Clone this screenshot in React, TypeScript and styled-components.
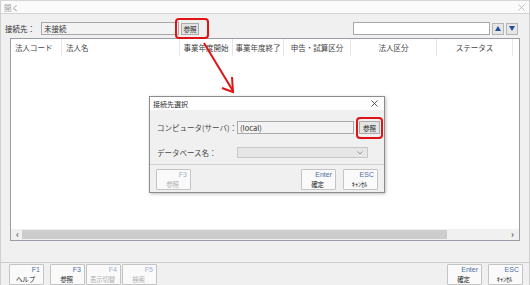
import React from "react";
import styled, { createGlobalStyle } from "styled-components";

const GlobalStyle = createGlobalStyle`
   html, body {
      margin: 0;
      padding: 0;
      background: #ffffff;
   }
   * {
      box-sizing: border-box;
   }
   body {
      font-family: "Noto Sans CJK JP", "Noto Sans", sans-serif;
   }
`;

const columns = [
   { name: "法人コード", align: "left" },
   { name: "法人名", align: "left" },
   { name: "事業年度開始", align: "center" },
   { name: "事業年度終了", align: "center" },
   { name: "申告・試算区分", align: "center" },
   { name: "法人区分", align: "center" },
   { name: "ステータス", align: "center" },
   { name: "", align: "left" },
];

const fnKeys = [
   { key: "F1", label: "ヘルプ", disabled: false },
   { key: "F3", label: "参照", disabled: false },
   { key: "F4", label: "表示切替", disabled: true },
   { key: "F5", label: "検索", disabled: true },
];

const App = () => {
   return (
      <>
         <GlobalStyle />
         <Window>
            <TitleBar>
               <span>開く</span>
               <svg width="7" height="7" viewBox="0 0 7 7">
                  <path d="M0.5 0.5 L6.5 6.5 M6.5 0.5 L0.5 6.5" stroke="#b4b4b4" strokeWidth="0.8" />
               </svg>
            </TitleBar>

            <TopRow>
               <Label>接続先：</Label>
               <ReadOnlyInput $width={138}>未接続</ReadOnlyInput>
               <SmallButton>参照</SmallButton>
               <Spacer />
               <SearchInput />
               <ArrowButton>
                  <svg width="6" height="5" viewBox="0 0 6 5">
                     <polygon points="3,0 6,5 0,5" fill="#1f4f9e" />
                  </svg>
               </ArrowButton>
               <ArrowButton>
                  <svg width="6" height="5" viewBox="0 0 6 5">
                     <polygon points="0,0 6,0 3,5" fill="#1f4f9e" />
                  </svg>
               </ArrowButton>
            </TopRow>

            <Table>
               <HeaderRow>
                  {columns.map((col, i) => (
                     <HeaderCell key={i} $align={col.align} $last={i === columns.length - 1}>
                        {col.name}
                     </HeaderCell>
                  ))}
               </HeaderRow>
               <TableBody />
               <HScroll>
                  <ScrollArrow>‹</ScrollArrow>
                  <ScrollThumb />
                  <ScrollArrow>›</ScrollArrow>
               </HScroll>
            </Table>

            <FnBar>
               {fnKeys.map((k) => (
                  <FnButton key={k.key} $disabled={k.disabled} $gap={k.key === "F3" ? 6 : 1}>
                     <FnKey>{k.key}</FnKey>
                     <FnLabel>{k.label}</FnLabel>
                  </FnButton>
               ))}
               <Spacer />
               <FnButton $gap={0}>
                  <FnKey>Enter</FnKey>
                  <FnLabel>確定</FnLabel>
               </FnButton>
               <FnButton $gap={6}>
                  <FnKey>ESC</FnKey>
                  <FnLabel>ｷｬﾝｾﾙ</FnLabel>
               </FnButton>
            </FnBar>

            <Highlight $x={174} $y={17} $w={34} $h={21} />

            <Arrow width="40" height="60" viewBox="0 0 40 60">
               <line x1="4" y1="3" x2="33" y2="51" stroke="#e01414" strokeWidth="2" />
               <polyline points="32,37 33,52 22,48" fill="none" stroke="#e01414" strokeWidth="2" />
            </Arrow>

            <Dialog>
               <DialogTitle>
                  <span>接続先選択</span>
                  <svg width="7" height="7" viewBox="0 0 7 7">
                     <path d="M0.5 0.5 L6.5 6.5 M6.5 0.5 L0.5 6.5" stroke="#333" strokeWidth="0.8" />
                  </svg>
               </DialogTitle>
               <DialogBody>
                  <FieldRow>
                     <FieldLabel>コンピュータ(サーバ)：</FieldLabel>
                     <ReadOnlyInput $width={117}>(local)</ReadOnlyInput>
                     <SmallButton $ml={5} $w={21} $h={13}>参照</SmallButton>
                  </FieldRow>
                  <FieldRow>
                     <FieldLabel>データベース名：</FieldLabel>
                     <SelectBox>
                        <svg width="6" height="4" viewBox="0 0 6 4">
                           <polyline points="0.5,0.5 3,3 5.5,0.5" fill="none" stroke="#8a8a8a" strokeWidth="0.9" />
                        </svg>
                     </SelectBox>
                  </FieldRow>
               </DialogBody>
               <DialogFooter>
                  <FnButton $disabled $gap={0}>
                     <FnKey>F3</FnKey>
                     <FnLabel>参照</FnLabel>
                  </FnButton>
                  <Spacer />
                  <FnButton $gap={0}>
                     <FnKey>Enter</FnKey>
                     <FnLabel>確定</FnLabel>
                  </FnButton>
                  <FnButton $gap={7}>
                     <FnKey>ESC</FnKey>
                     <FnLabel>ｷｬﾝｾﾙ</FnLabel>
                  </FnButton>
               </DialogFooter>
            </Dialog>

            <Highlight $x={355} $y={116} $w={27} $h={22} />
         </Window>
      </>
   );
};

const Window = styled.div`
   position: relative;
   width: 530px;
   height: 285px;
   background: #f0f0f0;
   border-left: 1px solid #cfcfcf;
   border-right: 1px solid #cfcfcf;
   border-top: 1px solid #d6d6d6;
   display: flex;
   flex-direction: column;
   font-size: 7.5px;
   color: #333;
   overflow: hidden;
`;

const TitleBar = styled.div`
   height: 13px;
   flex: none;
   background: #fbfbfb;
   border-bottom: 1px solid #d4d4d4;
   display: flex;
   align-items: center;
   justify-content: space-between;
   padding: 0 4px 0 3px;
   color: #a0a0a0;
   font-size: 7.5px;
`;

const TopRow = styled.div`
   flex: none;
   display: flex;
   align-items: center;
   height: 24px;
   padding: 5px 11px 0 4px;
`;

const Label = styled.span`
   width: 36px;
   color: #333;
`;

const ReadOnlyInput = styled.div<{ $width: number }>`
   width: ${(p) => p.$width}px;
   height: 13px;
   background: #f3f3f3;
   border: 1px solid #a8a8a8;
   padding-left: 2px;
   display: flex;
   align-items: center;
   color: #333;
   font-size: 7.5px;
`;

const SmallButton = styled.div<{ $ml?: number; $w?: number; $h?: number }>`
   margin-left: ${(p) => p.$ml ?? 2}px;
   width: ${(p) => p.$w ?? 18}px;
   height: ${(p) => p.$h ?? 12}px;
   background: #e4e4e4;
   border: 1px solid #acacac;
   display: flex;
   align-items: center;
   justify-content: center;
   font-size: 6.5px;
   color: #222;
`;

const Spacer = styled.div`
   flex: 1;
`;

const SearchInput = styled.div`
   width: 137px;
   height: 13px;
   background: #ffffff;
   border: 1px solid #a8a8a8;
`;

const ArrowButton = styled.div`
   width: 12px;
   height: 12px;
   margin-left: 2px;
   background: #e6e6e6;
   border: 1px solid #b4b4b4;
   display: flex;
   align-items: center;
   justify-content: center;
`;

const Table = styled.div`
   flex: none;
   height: 203px;
   margin: 0 9px 0 9px;
   background: #ffffff;
   border: 1px solid #9a9ca8;
   display: flex;
   flex-direction: column;
`;

const HeaderRow = styled.div`
   display: grid;
   grid-template-columns: 51px 118px 53px 51px 67px 86px 76px 1fr;
   height: 17px;
`;

const HeaderCell = styled.div<{ $align: string; $last: boolean }>`
   display: flex;
   align-items: center;
   justify-content: ${(p) => (p.$align === "center" ? "center" : "flex-start")};
   padding-left: ${(p) => (p.$align === "center" ? 0 : 4)}px;
   border-right: ${(p) => (p.$last ? "none" : "1px solid #e6e6e6")};
   color: #444;
   white-space: nowrap;
`;

const TableBody = styled.div`
   flex: 1;
`;

const HScroll = styled.div`
   height: 11px;
   background: #f0f0f0;
   display: flex;
   align-items: center;
   padding: 0 2px;
`;

const ScrollArrow = styled.div`
   width: 9px;
   text-align: center;
   font-size: 9px;
   line-height: 1;
   color: #606060;
   font-weight: bold;
`;

const ScrollThumb = styled.div`
   width: 425px;
   height: 9px;
   background: #cdcdcd;
   margin-right: auto;
`;

const FnBar = styled.div`
   flex: 1;
   margin-top: 21px;
   border-top: 1px solid #cccccc;
   display: flex;
   align-items: flex-start;
   padding: 1px 6px 0 7px;
`;

const FnButton = styled.div<{ $disabled?: boolean; $gap: number }>`
   width: 35px;
   height: 21px;
   margin-left: ${(p) => p.$gap}px;
   background: #fafafa;
   border: 1px solid #c4c4c4;
   border-radius: 1px;
   display: flex;
   flex-direction: column;
   padding: 0 3px 0 1px;
   color: ${(p) => (p.$disabled ? "#b0b0b0" : "#222")};
   & > span:first-child {
      color: ${(p) => (p.$disabled ? "#9fb3cf" : "#4b6ea3")};
   }
`;

const FnKey = styled.span`
   text-align: right;
   font-family: "Liberation Sans", "Noto Sans", sans-serif;
   font-size: 7px;
   line-height: 9px;
`;

const FnLabel = styled.span`
   text-align: center;
   font-size: 6.5px;
   line-height: 10px;
   white-space: nowrap;
   letter-spacing: -0.2px;
`;

const Highlight = styled.div<{ $x: number; $y: number; $w: number; $h: number }>`
   position: absolute;
   left: ${(p) => p.$x}px;
   top: ${(p) => p.$y}px;
   width: ${(p) => p.$w}px;
   height: ${(p) => p.$h}px;
   border: 2px solid #e01414;
   border-radius: 4px;
   z-index: 5;
`;

const Arrow = styled.svg`
   position: absolute;
   left: 199px;
   top: 39px;
   z-index: 5;
`;

const Dialog = styled.div`
   position: absolute;
   left: 148px;
   top: 95px;
   width: 236px;
   height: 97px;
   background: #f0f0f0;
   border: 1px solid #8c8c8c;
   box-shadow: 1px 1px 3px rgba(0, 0, 0, 0.25);
   display: flex;
   flex-direction: column;
   z-index: 4;
`;

const DialogTitle = styled.div`
   height: 13px;
   background: #ffffff;
   display: flex;
   align-items: center;
   justify-content: space-between;
   padding: 0 6px 0 3px;
   font-size: 7px;
   color: #333;
`;

const DialogBody = styled.div`
   display: flex;
   flex-direction: column;
   gap: 13px;
   padding: 11px 0 7px 7px;
   border-bottom: 1px solid #d0d0d0;
   height: 55px;
`;

const FieldRow = styled.div`
   display: flex;
   align-items: center;
   height: 13px;
`;

const FieldLabel = styled.span`
   width: 80px;
   color: #444;
   white-space: nowrap;
`;

const SelectBox = styled.div`
   width: 131px;
   height: 11px;
   background: #e6e6e6;
   border: 1px solid #c8c8c8;
   display: flex;
   align-items: center;
   justify-content: flex-end;
   padding-right: 4px;
`;

const DialogFooter = styled.div`
   display: flex;
   align-items: flex-start;
   padding: 4px 6px 0 6px;
`;

export default App;
